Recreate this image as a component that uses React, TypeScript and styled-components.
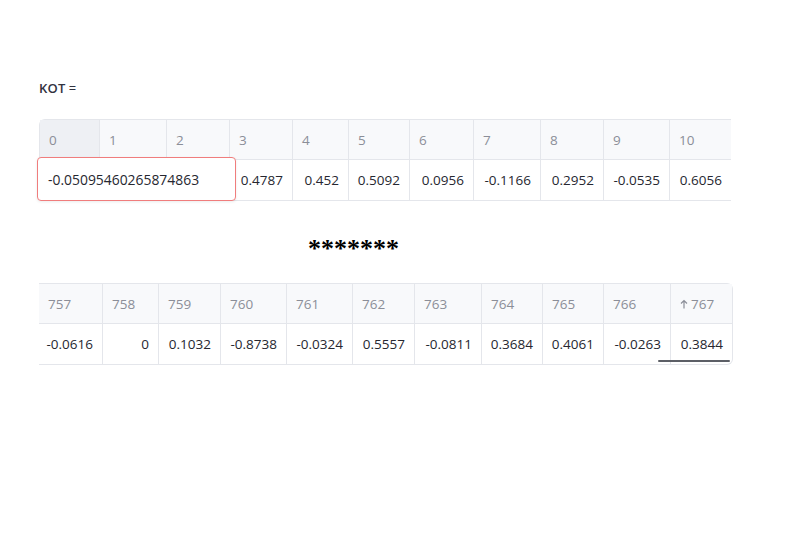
import styled, { createGlobalStyle } from "styled-components"

const GlobalStyle = createGlobalStyle`
    body {
        margin: 0;
        background: #ffffff;
        font-family: "Open Sans", "Noto Sans", sans-serif;
        color: #31333f;
    }
`

type Col = { header: string; value: string; width: number; sorted?: boolean }

const firstCols: Col[] = [
    { header: "0", value: "", width: 60 },
    { header: "1", value: "", width: 67 },
    { header: "2", value: "", width: 63 },
    { header: "3", value: "0.4787", width: 63 },
    { header: "4", value: "0.452", width: 56 },
    { header: "5", value: "0.5092", width: 61 },
    { header: "6", value: "0.0956", width: 64 },
    { header: "7", value: "-0.1166", width: 67 },
    { header: "8", value: "0.2952", width: 63 },
    { header: "9", value: "-0.0535", width: 66 },
    { header: "10", value: "0.6056", width: 61 },
]

const lastCols: Col[] = [
    { header: "757", value: "-0.0616", width: 64 },
    { header: "758", value: "0", width: 56 },
    { header: "759", value: "0.1032", width: 62 },
    { header: "760", value: "-0.8738", width: 66 },
    { header: "761", value: "-0.0324", width: 66 },
    { header: "762", value: "0.5557", width: 62 },
    { header: "763", value: "-0.0811", width: 67 },
    { header: "764", value: "0.3684", width: 61 },
    { header: "765", value: "0.4061", width: 61 },
    { header: "766", value: "-0.0263", width: 67 },
    { header: "767", value: "0.3844", width: 61, sorted: true },
]

const Page = styled.div`
    padding: 80px 0 0 39px;
    display: flex;
    flex-direction: column;
`

const Label = styled.div`
    font-size: 13px;
    line-height: 16px;
    color: #31333f;
    margin-bottom: 23px;

    strong {
        font-weight: 600;
        letter-spacing: 0.2px;
    }
`

const TableWrap = styled.div<{ $side: "left" | "right" }>`
    position: relative;
    align-self: flex-start;
    border-top: 1px solid #e4e6eb;
    border-bottom: 1px solid #e4e6eb;
    border-left: ${p => (p.$side === "left" ? "1px solid #e4e6eb" : "none")};
    border-right: ${p => (p.$side === "right" ? "1px solid #e4e6eb" : "none")};
    border-radius: ${p => (p.$side === "left" ? "6px 0 0 6px" : "0 6px 6px 0")};
`

const Row = styled.div<{ $cols: string }>`
    display: grid;
    grid-template-columns: ${p => p.$cols};
`

const HeadCell = styled.div<{ $active?: boolean }>`
    height: 39px;
    display: flex;
    align-items: center;
    gap: 3px;
    padding: 0 9px;
    background: ${p => (p.$active ? "#eef0f4" : "#f8f9fb")};
    border-right: 1px solid #e4e6eb;
    border-bottom: 1px solid #e4e6eb;
    color: #8b8e98;
    font-size: 13.5px;

    &:last-child {
        border-right: none;
    }
`

const DataCell = styled.div`
    height: 40px;
    display: flex;
    align-items: center;
    justify-content: flex-end;
    padding: 0 9px;
    border-right: 1px solid #e4e6eb;
    font-size: 13.5px;
    color: #262730;

    &:last-child {
        border-right: none;
    }
`

const Editor = styled.div`
    position: absolute;
    left: -3px;
    top: 37px;
    width: 199px;
    height: 44px;
    display: flex;
    align-items: center;
    padding-left: 10px;
    box-sizing: border-box;
    background: #ffffff;
    border: 1px solid #f07d7d;
    border-radius: 4px;
    box-shadow: 0 1px 3px rgba(0, 0, 0, 0.08);
    font-size: 13.9px;
    color: #262730;
`

const ScrollThumb = styled.div`
    position: absolute;
    right: 2px;
    bottom: 2px;
    width: 72px;
    height: 2px;
    border-radius: 1px;
    background: #5c5f66;
`

const Stars = styled.div`
    font-family: "Liberation Serif", "Times New Roman", serif;
    font-size: 26px;
    font-weight: 700;
    line-height: 30px;
    color: #000;
    margin: 33px 0 19px 269px;
`

const SortArrow = () => (
    <svg width="8" height="10" viewBox="0 0 8 10" fill="none" stroke="#8b8e98" strokeWidth="1.2">
        <path d="M4 9.5V1.5M1 4.5l3-3 3 3" />
    </svg>
)

const DataTable = ({ cols, side, editing }: { cols: Col[]; side: "left" | "right"; editing?: string }) => {
    const template = cols.map(c => `${c.width}px`).join(" ")
    return (
        <TableWrap $side={side}>
            <Row $cols={template}>
                {cols.map((c, i) => (
                    <HeadCell key={c.header} $active={editing !== undefined && i === 0}>
                        {c.sorted && <SortArrow />}
                        {c.header}
                    </HeadCell>
                ))}
            </Row>
            <Row $cols={template}>
                {cols.map(c => (
                    <DataCell key={c.header}>{c.value}</DataCell>
                ))}
            </Row>
            {editing && <Editor>{editing}</Editor>}
            {side === "right" && <ScrollThumb />}
        </TableWrap>
    )
}

export default function App() {
    return (
        <>
            <GlobalStyle />
            <Page>
                <Label>
                    <strong>KOT</strong> =
                </Label>
                <DataTable cols={firstCols} side="left" editing="-0.05095460265874863" />
                <Stars>*******</Stars>
                <DataTable cols={lastCols} side="right" />
            </Page>
        </>
    )
}
